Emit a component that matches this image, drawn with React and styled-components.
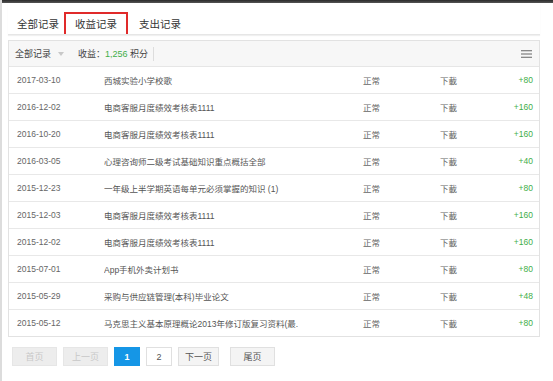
import React from "react";
import styled, { createGlobalStyle } from "styled-components";

const GlobalStyle = createGlobalStyle`
  html, body {
    margin: 0;
    padding: 0;
    background: #fff;
    font-family: "Liberation Sans", "Noto Sans CJK SC", sans-serif;
    color: #666;
  }
`;

const rows = [
  { date: "2017-03-10", title: "西城实验小学校歌", amount: "+80" },
  { date: "2016-12-02", title: "电商客服月度绩效考核表1111", amount: "+160" },
  { date: "2016-10-20", title: "电商客服月度绩效考核表1111", amount: "+160" },
  { date: "2016-03-05", title: "心理咨询师二级考试基础知识重点概括全部", amount: "+40" },
  { date: "2015-12-23", title: "一年级上半学期英语每单元必须掌握的知识 (1)", amount: "+80" },
  { date: "2015-12-03", title: "电商客服月度绩效考核表1111", amount: "+160" },
  { date: "2015-12-02", title: "电商客服月度绩效考核表1111", amount: "+160" },
  { date: "2015-07-01", title: "App手机外卖计划书", amount: "+80" },
  { date: "2015-05-29", title: "采购与供应链管理(本科)毕业论文", amount: "+48" },
  { date: "2015-05-12", title: "马克思主义基本原理概论2013年修订版复习资料(最.", amount: "+80" },
];

function App() {
  return (
    <>
      <GlobalStyle />
      <Page>
        <TopBar />
        <Content>
          <Tabs>
            <Tab>全部记录</Tab>
            <Tab active>收益记录</Tab>
            <Tab>支出记录</Tab>
          </Tabs>
          <Card>
            <Header>
              <Filter>
                全部记录 <Caret />
              </Filter>
              <Income>
                收益：<Green>1,256</Green> 积分
              </Income>
              <Divider />
              <MenuIcon viewBox="0 0 12 10">
                <path d="M0 1.5h12M0 5h12M0 8.5h12" stroke="#666" strokeWidth="1.2" />
              </MenuIcon>
            </Header>
            {rows.map((r, i) => (
              <Row key={i}>
                <span>{r.date}</span>
                <Title>{r.title}</Title>
                <span>正常</span>
                <span>下載</span>
                <Amount>{r.amount}</Amount>
              </Row>
            ))}
          </Card>
          <Pager>
            <PageBtn kind="disabled" w={45}>首页</PageBtn>
            <PageBtn kind="disabled" w={45}>上一页</PageBtn>
            <PageBtn kind="active" w={26}>1</PageBtn>
            <PageBtn w={26}>2</PageBtn>
            <PageBtn kind="soft" w={41}>下一页</PageBtn>
            <PageBtn kind="soft" w={45} last>尾页</PageBtn>
          </Pager>
        </Content>
      </Page>
    </>
  );
}
export default App;

const Page = styled.div`
  width: 553px;
  height: 381px;
  overflow: hidden;
  border-left: 2px solid #dcdcdc;
  box-sizing: border-box;
`;

const TopBar = styled.div`
  height: 3px;
  background: linear-gradient(#2a2a2a, #555);
`;

const Content = styled.div`
  padding: 0 13px 0 6px;
`;

const Tabs = styled.div`
  display: flex;
  align-items: flex-end;
  height: 31px;
  padding-left: 9px;
  border-bottom: 1px solid #e6e6e6;
  box-shadow: 0 1px 1px #f0f0f0;
  margin-bottom: 5px;
`;

const Tab = styled.div`
  box-sizing: border-box;
  height: 22px;
  line-height: 19px;
  padding: 1px ${(p) => (p.active ? "9px" : "0")} 0;
  margin: 0 ${(p) => (p.active ? "11px" : "0")} 0 ${(p) => (p.active ? "5px" : "0")};
  font-size: 10.5px;
  color: #333;
  border: 2px solid ${(p) => (p.active ? "#e02a2a" : "transparent")};
  border-bottom: 0;
  border-left-width: ${(p) => (p.active ? "2px" : "0")};
  border-right-width: ${(p) => (p.active ? "2px" : "0")};
`;

const Card = styled.div`
  border: 1px solid #e2e2e2;
  background: #fff;
`;

const Header = styled.div`
  display: flex;
  align-items: center;
  height: 25px;
  padding: 0 7px 0 6px;
  background: #f7f7f7;
  border-bottom: 1px solid #e6e6e6;
  font-size: 9px;
  color: #444;
`;

const Filter = styled.span`
  display: flex;
  align-items: center;
  gap: 7px;
`;

const Caret = styled.i`
  width: 0;
  height: 0;
  border-left: 3px solid transparent;
  border-right: 3px solid transparent;
  border-top: 4px solid #c8c8c8;
`;

const Income = styled.span`
  margin-left: 14px;
`;

const Green = styled.span`
  color: #3fae49;
`;

const Divider = styled.span`
  width: 1px;
  height: 14px;
  background: #ddd;
  margin-left: 5px;
`;

const MenuIcon = styled.svg`
  width: 11px;
  height: 10px;
  margin-left: auto;
`;

const Row = styled.div`
  display: grid;
  grid-template-columns: 87px 259px 77px 1fr auto;
  align-items: center;
  height: 26px;
  padding: 0 6px 0 8px;
  border-bottom: 1px solid #e8e8e8;
  font-size: 8.5px;
  color: #666;

  &:last-child {
    border-bottom: 0;
  }
`;

const Title = styled.span`
  color: #555;
  white-space: nowrap;
  overflow: hidden;
`;

const Amount = styled.span`
  color: #3fae49;
  text-align: right;
`;

const Pager = styled.div`
  display: flex;
  gap: 6px;
  padding: 10px 0 0 4px;
`;

const PageBtn = styled.div`
  box-sizing: border-box;
  width: ${(p) => p.w}px;
  height: 19px;
  display: flex;
  align-items: center;
  justify-content: center;
  font-size: 9px;
  margin-left: ${(p) => (p.last ? "5px" : "0")};
  border: 1px solid
    ${(p) => (p.kind === "active" ? "#1596e6" : p.kind === "disabled" ? "#e6e6e6" : "#e0e0e0")};
  background: ${(p) =>
    p.kind === "active" ? "#1596e6" : p.kind === "disabled" ? "#ededed" : p.kind === "soft" ? "#f4f4f4" : "#fff"};
  color: ${(p) => (p.kind === "active" ? "#fff" : p.kind === "disabled" ? "#c8c8c8" : "#555")};
  font-weight: ${(p) => (p.kind === "active" ? "bold" : "normal")};
`;
